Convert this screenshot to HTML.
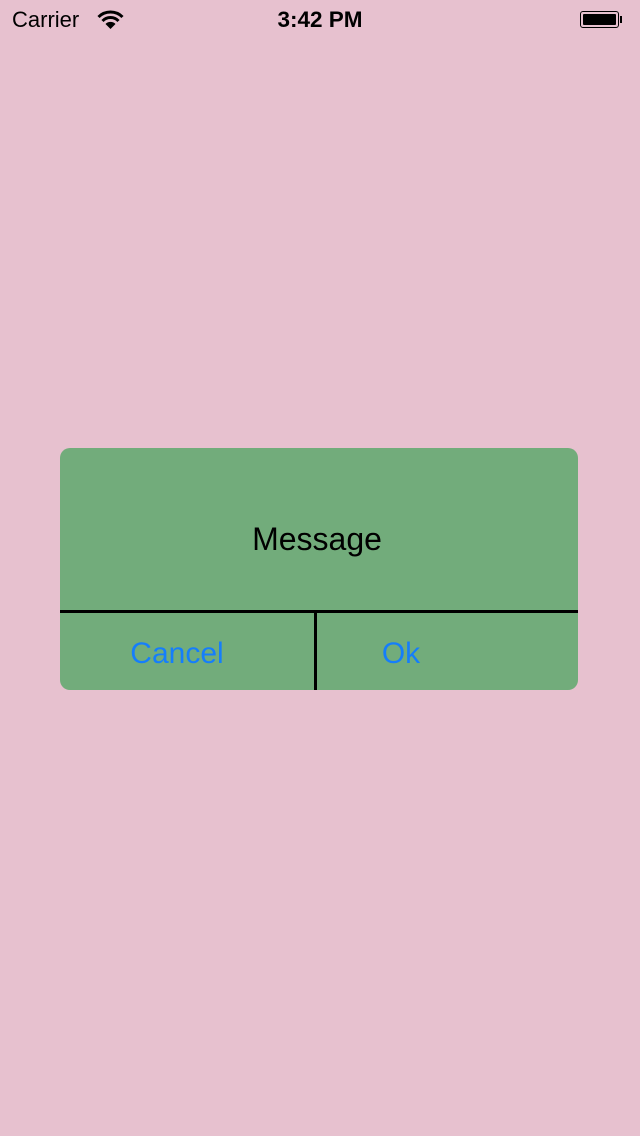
<!DOCTYPE html>
<html><head><style>
body{margin:0;width:640px;height:1136px;background:#e7c1cf;position:relative;font-family:"Liberation Sans",sans-serif;overflow:hidden}
.a{position:absolute}
</style></head><body>
<div class="a" style="left:12px;top:7px;font-size:22px;color:#000">Carrier</div>
<svg class="a" style="left:97px;top:9px" width="27" height="22" viewBox="0 0 27 22">
<path d="M1.5 8 A17 17 0 0 1 25.5 8" stroke="#000" stroke-width="3" fill="none"/>
<path d="M5.5 12 A11 11 0 0 1 21.5 12" stroke="#000" stroke-width="3" fill="none"/>
<path d="M13.5 20 L8.5 15 A7 7 0 0 1 18.5 15 Z" fill="#000"/>
</svg>
<div class="a" style="left:0;width:640px;text-align:center;top:7px;font-size:22.5px;font-weight:bold;color:#000">3:42 PM</div>
<div class="a" style="left:580px;top:11px;width:39px;height:17px;border:1.5px solid #000;border-radius:3px;box-sizing:border-box;padding:2px"><div style="background:#000;width:100%;height:100%;border-radius:1px"></div></div>
<div class="a" style="left:620px;top:16px;width:2px;height:7px;background:#000"></div>
<div class="a" style="left:60px;top:448px;width:518px;height:242px;background:#72ac7b;border-radius:10px;overflow:hidden">
<div class="a" style="left:0;width:514px;top:73px;text-align:center;font-size:32px;color:#000">Message</div>
<div class="a" style="left:0;top:162px;width:518px;height:3px;background:#000"></div>
<div class="a" style="left:254px;top:162px;width:3px;height:80px;background:#000"></div>
<div class="a" style="left:0;width:234px;top:189px;text-align:center;font-size:30px;color:#157efb">Cancel</div>
<div class="a" style="left:300px;width:82px;top:189px;text-align:center;font-size:30px;color:#157efb">Ok</div>
</div>
</body></html>
